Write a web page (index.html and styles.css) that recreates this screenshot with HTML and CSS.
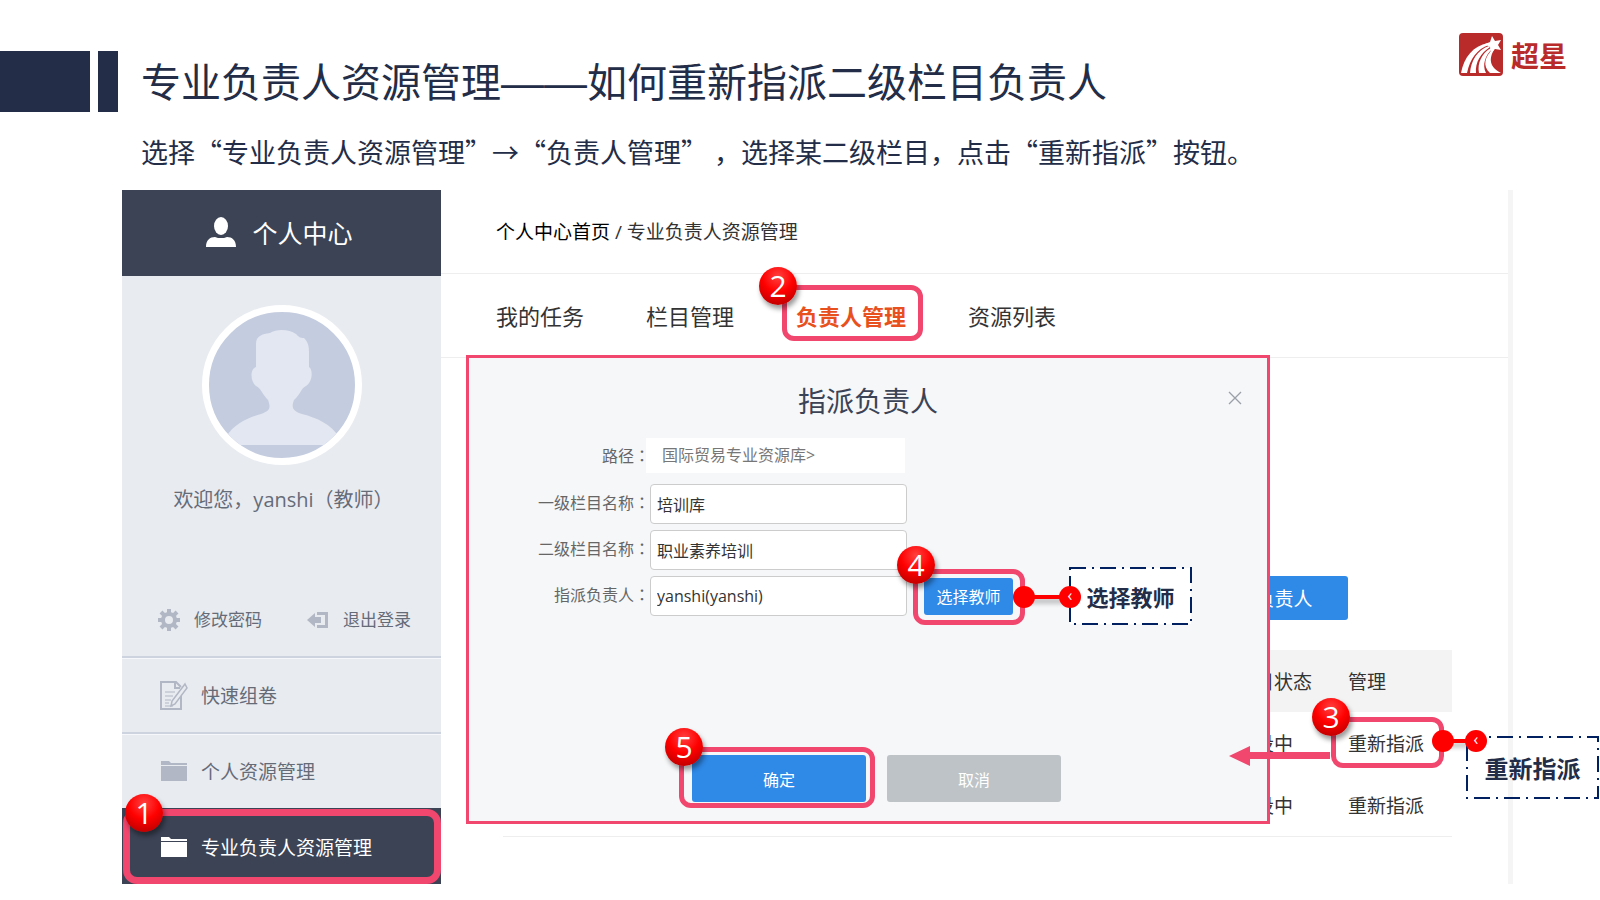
FILE: index.html
```
<!DOCTYPE html>
<html lang="zh-CN">
<head>
	<meta charset="UTF-8">
	<title>专业负责人资源管理</title>
	<meta name="viewport" content="width=device-width, initial-scale=1.0">
	<link rel="stylesheet" href="styles.css">
</head>
<body>
	<header class="slide-header">
		<div class="bar bar-wide"></div>
		<div class="bar bar-narrow"></div>
		<h1>专业负责人资源管理<span class="dash">——</span>如何重新指派二级栏目负责人</h1>
		<div class="logo">
			<svg width="44" height="43" viewBox="0 0 44 43">
				<rect width="44" height="43" rx="4" fill="#b92a2b"/>
				<path fill="#fff" d="M33 3l3 5 6-1-3 5 3 5-6-1-4 4-1-6-5-3 5-2z"/>
				<path fill="#fff" d="M2 40C5 24 14 13 29 10l1 2C18 16 11 26 8 40z"/>
				<path fill="#fff" d="M11 40C12 28 18 17 30 13l1 1C22 20 16 29 17 40z"/>
				<path fill="#fff" d="M20 40C18 30 23 20 32 15l1 1C26 23 23 32 27 40z"/>
				<path fill="#fff" d="M31 40C23 33 26 23 34 16l1 1C30 25 30 34 42 40z"/>
			</svg>
			<span>超星</span>
		</div>
	</header>
	<p class="intro">选择“专业负责人资源管理”→“负责人管理” ，选择某二级栏目，点击“重新指派”按钮。</p>

	<div class="panel">
		<aside class="sidebar">
			<div class="side-head">
				<svg width="30" height="31" viewBox="0 0 30 31" fill="#fff">
					<ellipse cx="15" cy="9" rx="7" ry="9"/>
					<path d="M0 30c0-7 4-10 9-10 2 1 4 1 6 1s4 0 6-1c5 0 9 3 9 10z"/>
				</svg>
				<span>个人中心</span>
			</div>
			<div class="avatar">
				<svg viewBox="0 0 146 146">
					<path fill="#e3e7f1" d="M47 55V32c0-8 6-10 14-11 6-4 19-4 26 1 3 3 4 4 8 4 4 4 5 8 5 14v15c4 2 4 15-3 19-5 2-5 8-12 14-3 8-1 11 8 14 15 4 29 10 37 23l-14 8H31l-14-8c8-13 21-19 35-23 9-3 10-6 7-14-6-6-7-12-12-14-6-5-6-17 0-19z"/>
				</svg>
			</div>
			<p class="welcome">欢迎您，yanshi（教师）</p>
			<div class="account">
				<a href="#">
					<svg width="22" height="22" viewBox="0 0 22 22" fill="none" stroke="#b1b7c4">
						<circle cx="11" cy="11" r="6" stroke-width="4"/>
						<path stroke-width="4" d="M11 0v4M11 18v4M0 11h4M18 11h4M3 3l3 3M16 16l3 3M19 3l-3 3M6 16l-3 3"/>
					</svg>
					<span>修改密码</span>
				</a>
				<a href="#">
					<svg width="22" height="18" viewBox="0 0 22 18" fill="#b1b7c4">
						<path d="M0 9l8-7v4h6v6H8v4z"/>
						<path d="M10 1h11v16H10v-3h8V4h-8z"/>
					</svg>
					<span>退出登录</span>
				</a>
			</div>
			<nav class="menu">
				<a href="#">
					<svg width="28" height="29" viewBox="0 0 28 29" fill="none" stroke="#b1b7c4" stroke-width="2">
						<path d="M21 14v14H1V1h15l5 5M15 1v6h5"/>
						<path stroke-width="1" d="M5 11h10M5 15h8M5 19h6M5 22h4M5 25h8"/>
						<path fill="#e8ebf0" stroke-width="1.5" d="M25 3l2 4-12 16-4 2 1-5z"/>
					</svg>
					<span>快速组卷</span>
				</a>
				<a href="#">
					<svg width="26" height="20" viewBox="0 0 26 20" fill="#b1b7c4">
						<path d="M0 0h8l2 2h16v2H0zM0 5h26v15H0z"/>
					</svg>
					<span>个人资源管理</span>
				</a>
				<a href="#" class="active mark mark-menu">
					<svg width="26" height="20" viewBox="0 0 26 20" fill="#fff">
						<path d="M0 0h8l2 2h16v2H0zM0 5h26v15H0z"/>
					</svg>
					<span>专业负责人资源管理</span>
					<b class="badge">1</b>
				</a>
			</nav>
		</aside>

		<main class="main">
			<div class="breadcrumb"><a href="#">个人中心首页</a> / <span>专业负责人资源管理</span></div>
			<nav class="tabs">
				<a href="#">我的任务</a>
				<a href="#">栏目管理</a>
				<a href="#" class="current mark mark-tab">负责人管理<b class="badge">2</b></a>
				<a href="#">资源列表</a>
			</nav>
			<div class="content">
				<button type="button" class="btn btn-assign">负责人</button>
				<table>
					<thead>
						<tr><th></th><th class="col-state">栏目状态</th><th class="col-manage">管理</th></tr>
					</thead>
					<tbody>
						<tr>
							<td></td>
							<td>建设中</td>
							<td>
								<a href="#" class="mark mark-row">重新指派
									<b class="badge">3</b>
									<svg class="arrow" width="101" height="20" viewBox="0 0 101 20" fill="#f1466d"><path d="M0 10L21 0v6h80v7H21v7z"/></svg>
								</a>
								<div class="callout callout-row">
									<i class="link"></i>
									<svg class="frame"><rect width="100%" height="100%"/></svg>
									<i class="dot">‹</i>
									<strong>重新指派</strong>
								</div>
							</td>
						</tr>
						<tr><td></td><td>建设中</td><td><a href="#">重新指派</a></td></tr>
					</tbody>
				</table>
			</div>

			<form class="modal">
				<button type="button" class="close" aria-label="关闭">
					<svg width="14" height="14" viewBox="0 0 14 14" stroke="#9a9fa8" stroke-width="1.3"><path d="M1 1l12 12M13 1L1 13"/></svg>
				</button>
				<h2>指派负责人</h2>
				<div class="field field-path">
					<span class="name">路径<span class="colon" lang="zh-TW">：</span></span>
					<span class="path">国际贸易专业资源库&gt;</span>
				</div>
				<div class="field">
					<label class="name" for="level1">一级栏目名称<span class="colon" lang="zh-TW">：</span></label>
					<input type="text" id="level1" value="培训库">
				</div>
				<div class="field">
					<label class="name" for="level2">二级栏目名称<span class="colon" lang="zh-TW">：</span></label>
					<input type="text" id="level2" value="职业素养培训">
				</div>
				<div class="field">
					<label class="name" for="owner">指派负责人<span class="colon" lang="zh-TW">：</span></label>
					<input type="text" id="owner" value="yanshi(yanshi)">
					<div class="mark mark-choose">
						<button type="button" class="btn btn-choose">选择教师</button>
						<b class="badge">4</b>
						<div class="callout callout-choose">
							<i class="link"></i>
							<svg class="frame"><rect width="100%" height="100%"/></svg>
							<i class="dot">‹</i>
							<strong>选择教师</strong>
						</div>
					</div>
				</div>
				<div class="buttons">
					<div class="mark mark-ok">
						<button type="button" class="btn">确定</button>
						<b class="badge">5</b>
					</div>
					<button type="button" class="btn btn-cancel">取消</button>
				</div>
			</form>
		</main>
	</div>
</body>
</html>
```
FILE: styles.css
```
* {
	box-sizing: border-box;
}

body {
	margin: 0;
	background-color: #fff;
	color: #333;
	font-family: "Open Sans", "Noto Sans CJK SC", sans-serif;
	font-size: 19px;
}

a {
	color: inherit;
	text-decoration: none;
}

button, input {
	font-family: inherit;
	font-size: 16px;
}

/* slide title */
.slide-header {
	display: flex;
	padding: 33px 33px 0 0;
}

.bar {
	height: 61px;
	margin: 18px 8px 0 0;
	background-color: #232d47;
}

.bar-wide {
	width: 90px;
}

.bar-narrow {
	width: 20px;
	margin-right: 23px;
}

h1 {
	margin: 17px 0 0;
	color: #232d47;
	font-family: "Noto Sans CJK SC", sans-serif;
	font-size: 40px;
	font-weight: 400;
	line-height: 60px;
	white-space: nowrap;
}

.dash {
	font-family: "Liberation Sans", sans-serif;
	font-size: 43px;
	line-height: 1;
}

.logo {
	display: flex;
	align-items: center;
	gap: 8px;
	height: 43px;
	margin-left: auto;
	color: #b92a2b;
	font-size: 28px;
	font-weight: 700;
}

.intro {
	margin: 20px 0 18px 141px;
	color: #232d47;
	font-family: "Noto Sans CJK SC", sans-serif;
	font-size: 27px;
	line-height: 40px;
	white-space: nowrap;
}

.panel {
	display: flex;
	margin: 0 87px 0 122px;
}

/* sidebar */
.sidebar {
	flex: 0 0 319px;
	background-color: #e8ebf0;
	color: #666b78;
}

.side-head {
	display: flex;
	align-items: center;
	justify-content: center;
	gap: 16px;
	height: 86px;
	padding: 0 4px 2px 0;
	background-color: #3c4355;
	color: #fff;
	font-size: 25px;
}

.avatar {
	width: 160px;
	height: 160px;
	margin: 29px auto 0;
	border: 7px solid #fff;
	border-radius: 50%;
	background-color: #c4ccdf;
	overflow: hidden;
}

.avatar svg {
	display: block;
}

.welcome {
	margin: 20px 0 90px;
	padding-left: 4px;
	font-size: 20px;
	line-height: 30px;
	text-align: center;
}

.account {
	display: flex;
	justify-content: space-between;
	padding: 0 30px 21px 36px;
	font-size: 17px;
	line-height: 30px;
}

.account a {
	display: flex;
	align-items: center;
	gap: 14px;
}

.menu a {
	display: flex;
	align-items: center;
	height: 76px;
	padding-left: 38px;
	border-top: 2px solid #cdd4df;
	box-shadow: inset 0 1px #f5f7fa;
}

.menu svg {
	width: 28px;
	margin-right: 13px;
}

.menu .active {
	background-color: #3c4355;
	border-color: #3c4355;
	box-shadow: none;
	color: #fff;
}

/* main area */
.main {
	position: relative;
	flex: 1;
	border-right: 5px solid #f5f5f5;
}

.breadcrumb, .tabs {
	height: 84px;
	padding-left: 55px;
	border-bottom: 1px solid #eee;
	line-height: 84px;
}

.breadcrumb a {
	color: #000;
}

.tabs {
	display: flex;
	align-items: center;
	gap: 62px;
	font-size: 22px;
	line-height: 32px;
}

.tabs .current {
	color: #e8501e;
	font-weight: 700;
}

.content {
	display: flex;
	flex-direction: column;
	align-items: flex-end;
	padding: 218px 56px 46px 62px;
}

.btn {
	width: 174px;
	height: 47px;
	padding: 0;
	border: 0;
	border-radius: 3px;
	background-color: #2f89e7;
	color: #fff;
}

.btn-assign {
	width: 128px;
	height: 44px;
	margin: 0 104px 30px 0;
	font-size: 19px;
}

table {
	width: 100%;
	border-collapse: collapse;
	table-layout: fixed;
	border-bottom: 1px solid #eee;
}

th, td {
	height: 62px;
	padding: 0;
	font-weight: 400;
	text-align: left;
}

td {
	position: relative;
}

thead {
	background-color: #f3f3f3;
}

.col-state {
	width: 112px;
}

.col-manage {
	width: 104px;
}

/* dialog */
.modal {
	position: absolute;
	z-index: 1;
	top: 165px;
	left: 25px;
	right: 238px;
	height: 469px;
	border: 3px solid #f1466d;
	background-color: #f5f7f9;
}

.modal h2 {
	margin: 23px 0 14px;
	color: #3c4355;
	font-size: 28px;
	font-weight: 400;
	line-height: 40px;
	text-align: center;
}

.close {
	position: absolute;
	top: 33px;
	right: 25px;
	padding: 0;
	border: 0;
	background: none;
	line-height: 0;
}

.field {
	display: flex;
	align-items: center;
	height: 40px;
	margin-bottom: 6px;
	font-size: 16px;
}

.field-path {
	margin-bottom: 9px;
}

.name {
	width: 181px;
	color: #666;
	line-height: 24px;
	text-align: right;
}

label.name {
	padding-bottom: 4px;
}

/* the TC face centres the colon in its box */
.colon {
	font-family: "Noto Sans CJK TC", sans-serif;
}

.path {
	width: 259px;
	height: 35px;
	margin-left: -4px;
	padding-left: 16px;
	background-color: #fff;
	color: #777;
	line-height: 35px;
}

.field input {
	width: 257px;
	height: 40px;
	padding: 0 6px;
	border: 1px solid #ccc;
	border-radius: 4px;
	background-color: #fff;
	color: #333;
}

.btn-choose {
	display: block;
	width: 89px;
	height: 37px;
}

.mark-choose {
	margin-left: 17px;
}

.buttons {
	display: flex;
	gap: 21px;
	margin: 139px 0 0 223px;
}

.btn-cancel {
	background-color: #bec3c7;
}

/* pink rings with numbered badges */
.mark {
	position: relative;
}

.mark::after {
	content: "";
	position: absolute;
	border: 5px solid #f1466d;
	border-radius: 12px;
	pointer-events: none;
}

.mark-menu::after {
	inset: -1px 0 0 1px;
	border-width: 7px;
	border-radius: 14px;
}

.mark-tab::after {
	inset: -15px -17px -9px -14px;
}

.mark-row::after {
	z-index: 2;
	inset: -14px -20px -11px -17px;
}

.mark-choose::after {
	inset: -9px -12px -10px -11px;
}

.mark-ok::after {
	inset: -8px -9px -6px -13px;
}

.badge {
	position: absolute;
	z-index: 3;
	width: 38px;
	height: 38px;
	border-radius: 50%;
	background: radial-gradient(circle at 50% 25%, #ff4040, #f00 45%, #e80000 60%, #a80000);
	box-shadow: 2px 4px 5px rgba(0, 0, 0, 0.4);
	color: #fff;
	font-size: 30px;
	font-weight: 400;
	line-height: 38px;
	text-align: center;
}

.mark-menu .badge {
	top: -16px;
	left: 3px;
}

.mark-tab .badge {
	top: -33px;
	left: -37px;
}

.mark-row .badge {
	top: -33px;
	left: -36px;
}

.mark-choose .badge {
	top: -32px;
	left: -27px;
}

.mark-ok .badge {
	top: -27px;
	left: -27px;
}

.arrow {
	position: absolute;
	z-index: 2;
	top: 15px;
	left: -119px;
}

/* dash-dot callouts */
.callout {
	position: absolute;
	z-index: 4;
	display: flex;
	align-items: center;
	justify-content: center;
	color: #232d47;
	white-space: nowrap;
}

.callout-choose {
	top: -10px;
	left: 146px;
	width: 121px;
	height: 56px;
	background-color: #fff;
	font-size: 22px;
}

.callout-row {
	top: 25px;
	left: 119px;
	width: 131px;
	height: 61px;
	font-size: 24px;
}

.frame {
	position: absolute;
	width: 100%;
	height: 100%;
	overflow: visible;
	fill: none;
	stroke: #002060;
	stroke-width: 2;
	stroke-dasharray: 16 6 2 6;
}

.link {
	position: absolute;
	top: 27px;
	left: -46px;
	width: 46px;
	height: 4px;
	background-color: #f00;
	box-shadow: 2px 4px 5px rgba(0, 0, 0, 0.3);
}

.link::before {
	content: "";
	position: absolute;
	top: -9px;
	left: -11px;
	width: 22px;
	height: 22px;
	border-radius: 50%;
	background-color: #f00;
}

.dot {
	position: absolute;
	top: 18px;
	left: -11px;
	width: 22px;
	height: 22px;
	border-radius: 50%;
	background-color: #f00;
	color: #fff;
	font-size: 16px;
	font-style: normal;
	line-height: 19px;
	text-align: center;
}

.callout-row .link {
	top: 2px;
	left: -24px;
	width: 32px;
}

.callout-row .dot {
	top: -7px;
	left: -2px;
}
```
